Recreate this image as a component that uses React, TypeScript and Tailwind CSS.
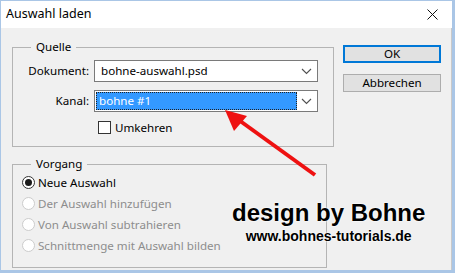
import React from "react";

const font = "font-['Segoe_UI','Noto_Sans',sans-serif]";

const Chevron = () => (
  <svg width="11" height="7" viewBox="0 0 11 7" className="shrink-0">
    <path d="M1 1 L5.5 5.5 L10 1" fill="none" stroke="#505050" strokeWidth="1.1" />
  </svg>
);

const Radio = ({ label, checked, disabled }: { label: string; checked?: boolean; disabled?: boolean }) => (
  <div className="flex items-center h-[21px] shrink-0">
    <span
      className={`w-[13px] h-[13px] rounded-full border bg-white flex items-center justify-center ${
        disabled ? "border-[#cccccc]" : "border-[#333333]"
      }`}
    >
      {checked && <span className="w-[7px] h-[7px] rounded-full bg-[#1a1a1a]" />}
    </span>
    <span className={`ml-[3px] ${disabled ? "text-[#8d8d8d]" : "text-[#000000]"}`}>{label}</span>
  </div>
);

export default function App() {
  return (
    <div className={`w-[455px] h-[273px] bg-[#aac6e6] pl-px pr-[3px] pb-[3px] pt-px flex flex-col text-[11.6px] ${font}`}>
      {/* title bar */}
      <div className="h-[27px] bg-white flex items-center justify-between pl-[5px] pr-[14px] shrink-0">
        <span className="text-[#000] text-[12.5px]">Auswahl laden</span>
        <svg width="11" height="11" viewBox="0 0 11 11">
          <path d="M0.5 0.5 L10.5 10.5 M10.5 0.5 L0.5 10.5" stroke="#111" strokeWidth="1" />
        </svg>
      </div>

      {/* body */}
      <div className="relative flex-1 bg-[#f0f0f0] border-r border-[#c9c9c9] flex pl-[11px] pt-[11px]">
        <div className="w-[315px] flex flex-col gap-[9px]">
          <fieldset className="border border-[#b4b4b4] h-[108px] px-[15px] pt-0 shrink-0">
            <legend className="px-[5px] ml-[3px] text-[#000] leading-[16px]">Quelle</legend>
            <div className="flex items-center mt-[5px]">
              <span className="w-[61px] text-right text-[#000]">Dokument:</span>
              <div className="ml-[5px] w-[224px] h-[22px] bg-white border border-[#7a7a7a] flex items-center justify-between pl-[6px] pr-[5px]">
                <span className="text-[#000]">bohne-auswahl.psd</span>
                <Chevron />
              </div>
            </div>
            <div className="flex items-center mt-[8px]">
              <span className="w-[61px] text-right text-[#000]">Kanal:</span>
              <div className="ml-[5px] w-[224px] h-[22px] bg-white border border-[#7a7a7a] flex items-center justify-between p-[1px] pr-[5px]">
                <div className="h-full w-[201px] bg-[#3399ff] border border-dotted border-[#222] flex items-center pl-[2px]">
                  <span className="text-white">bohne #1</span>
                </div>
                <Chevron />
              </div>
            </div>
            <div className="flex items-center mt-[7px] ml-[70px]">
              <span className="w-[13px] h-[13px] bg-white border border-[#333]" />
              <span className="ml-[4px] text-[#000]">Umkehren</span>
            </div>
          </fieldset>

          <fieldset className="border border-[#b4b4b4] h-[112px] px-[9px] pt-0 shrink-0">
            <legend className="px-[5px] ml-[9px] text-[#000] leading-[16px]">Vorgang</legend>
            <div className="flex flex-col">
              <Radio label="Neue Auswahl" checked />
              <Radio label="Der Auswahl hinzufügen" disabled />
              <Radio label="Von Auswahl subtrahieren" disabled />
              <Radio label="Schnittmenge mit Auswahl bilden" disabled />
            </div>
          </fieldset>
        </div>

        <div className="ml-[16px] mt-[6px] flex flex-col gap-[11px] w-[98px]">
          <button className="h-[18px] border-2 border-[#0078d7] bg-[#e1e1e1] text-[#000] leading-none">OK</button>
          <button className="h-[18px] border border-[#adadad] bg-[#e1e1e1] text-[#000] leading-none">Abbrechen</button>
        </div>

        {/* watermark */}
        <div className="absolute left-[231px] top-[172px] flex flex-col items-center font-['Liberation_Sans',Arial,sans-serif] font-bold text-[#000] [text-shadow:0_0_2px_#fff,0_0_2px_#fff]">
          <span className="text-[24px] leading-[26px]">design by Bohne</span>
          <span className="text-[14px] leading-[18px] mt-[1px]">www.bohnes-tutorials.de</span>
        </div>
      </div>

      {/* red arrow */}
      <svg className="absolute left-0 top-0 pointer-events-none" width="455" height="273">
        <line x1="315" y1="175" x2="236" y2="118" stroke="#ee1111" strokeWidth="4" />
        <polygon points="225,110 247,116 234,131" fill="#ee1111" />
      </svg>
    </div>
  );
}
